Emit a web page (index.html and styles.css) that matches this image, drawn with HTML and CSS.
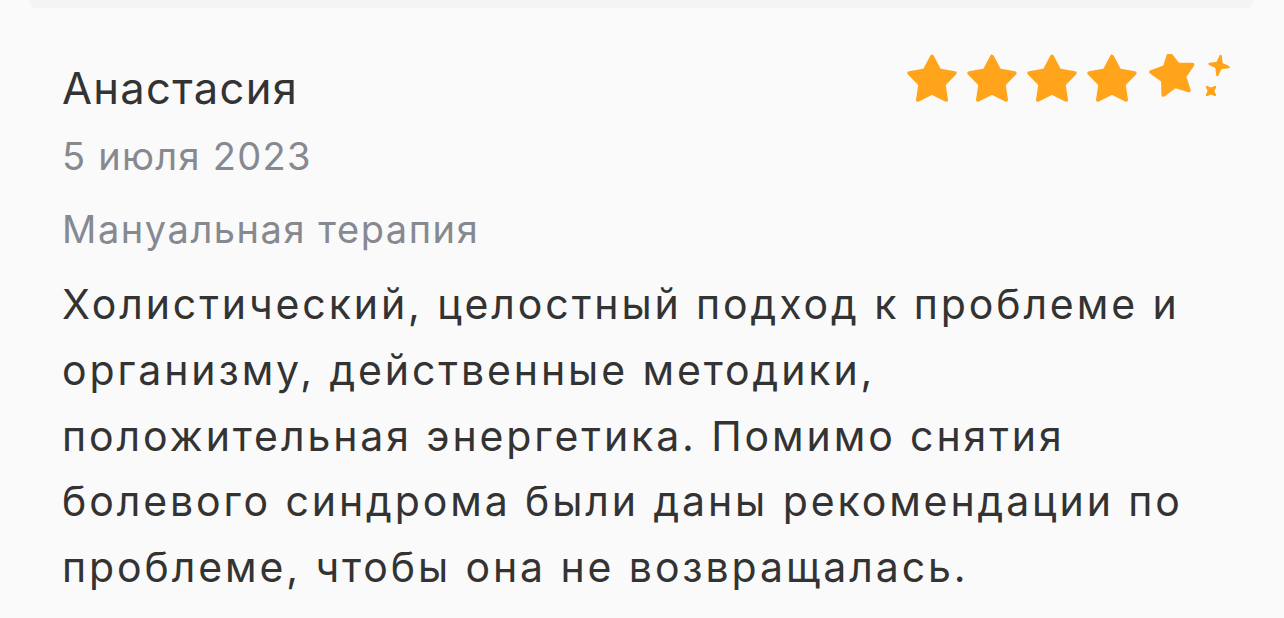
FILE: index.html
```html
<!DOCTYPE html>
<html lang="ru">
<head>
<meta charset="utf-8">
<title>Отзыв</title>
<link rel="stylesheet" href="styles.css">
</head>
<body>
<div class="prev-card"></div>
<article class="review">
  <header class="review-head">
    <div class="who">
      <div class="name">Анастасия</div>
      <div class="date">5 июля 2023</div>
    </div>
    <div class="stars" aria-label="Оценка 5 из 5">
      <svg class="star" viewBox="0 0 50 50" width="50" height="50"><polygon points="25,2.7 32.23,16.55 47.64,19.15 36.7,30.3 38.99,45.75 25,38.8 11.01,45.75 13.3,30.3 2.36,19.15 17.77,16.55"/></svg>
      <svg class="star" viewBox="0 0 50 50" width="50" height="50"><polygon points="25,2.7 32.23,16.55 47.64,19.15 36.7,30.3 38.99,45.75 25,38.8 11.01,45.75 13.3,30.3 2.36,19.15 17.77,16.55"/></svg>
      <svg class="star" viewBox="0 0 50 50" width="50" height="50"><polygon points="25,2.7 32.23,16.55 47.64,19.15 36.7,30.3 38.99,45.75 25,38.8 11.01,45.75 13.3,30.3 2.36,19.15 17.77,16.55"/></svg>
      <svg class="star" viewBox="0 0 50 50" width="50" height="50"><polygon points="25,2.7 32.23,16.55 47.64,19.15 36.7,30.3 38.99,45.75 25,38.8 11.01,45.75 13.3,30.3 2.36,19.15 17.77,16.55"/></svg>
      <svg class="star star-sparkle" viewBox="0 0 85 50" width="85" height="50">
        <g transform="translate(26 21) rotate(-10) scale(0.93) translate(-25 -26.5)">
          <polygon points="25,2.7 32.23,16.55 47.64,19.15 36.7,30.3 38.99,45.75 25,38.8 11.01,45.75 13.3,30.3 2.36,19.15 17.77,16.55"/>
        </g>
        <g transform="translate(72 11.5) rotate(10)">
          <polygon class="spark" points="0,-9.6 2.2,-2.2 9.6,0 2.2,2.2 0,9.6 -2.2,2.2 -9.6,0 -2.2,-2.2"/>
        </g>
        <g transform="translate(64 37) rotate(45)">
          <polygon class="spark" points="0,-5.6 1.5,-1.5 5.6,0 1.5,1.5 0,5.6 -1.5,1.5 -5.6,0 -1.5,-1.5"/>
        </g>
      </svg>
    </div>
  </header>
  <div class="category">Мануальная терапия</div>
  <p class="text">Холистический, целостный подход к проблеме и<br>организму, действенные методики,<br>положительная энергетика. Помимо снятия<br>болевого синдрома были даны рекомендации по<br>проблеме, чтобы она не возвращалась.</p>
</article>
</body>
</html>
```

FILE: styles.css
```css
* { box-sizing: border-box; }

html, body {
  margin: 0;
  padding: 0;
  background: #fafafa;
  font-family: Inter, "Noto Sans", sans-serif;
  color: #333333;
}

.prev-card {
  height: 8px;
  margin: 0 31px 0 30px;
  background: #f3f4f6;
  border-radius: 0 0 6px 6px;
}

.review {
  padding: 46px 52px 0 62px;
}

.review-head {
  display: flex;
  justify-content: space-between;
  align-items: flex-start;
}

.name {
  margin-top: 8.5px;
  font-size: 43.5px;
  line-height: 50px;
  letter-spacing: 1.3px;
  color: #333333;
}

.date {
  margin-top: 18.7px;
  font-size: 38px;
  line-height: 50px;
  letter-spacing: 1.27px;
  color: #878991;
}

.stars {
  display: flex;
  gap: 10px;
}

.star {
  display: block;
  fill: #ffa41b;
  stroke: #ffa41b;
  stroke-width: 4;
  stroke-linejoin: round;
}

.star .spark {
  stroke-width: 2.4;
}

.category {
  margin-top: 23px;
  font-size: 38px;
  line-height: 50px;
  letter-spacing: 1.55px;
  color: #878991;
}

.text {
  margin: 18px 0 0;
  font-size: 41px;
  line-height: 65.7px;
  letter-spacing: 2.9px;
  color: #333333;
}
```
